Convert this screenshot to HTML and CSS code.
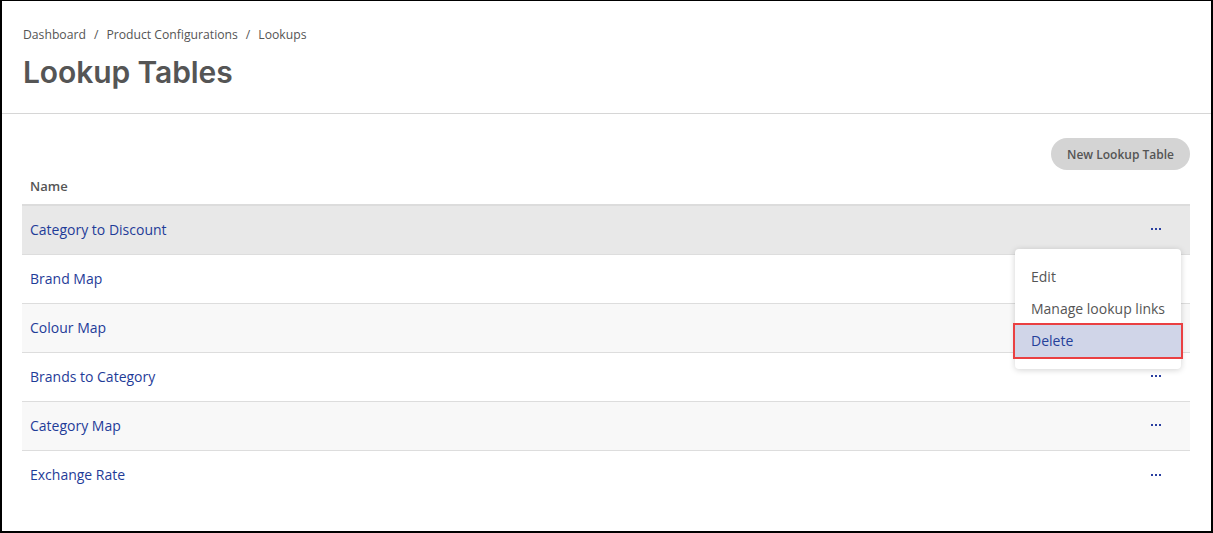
FILE: index.html
```html
<!DOCTYPE html>
<html lang="en">
<head>
    <meta charset="UTF-8">
    <title>Lookup Tables</title>
    <link rel="stylesheet" href="styles.css">
</head>
<body>
<div class="frame">
    <div class="page_head">
        <div class="crumbs">
            <span>Dashboard</span><span class="sep">/</span><span>Product Configurations</span><span class="sep">/</span><span>Lookups</span>
        </div>
        <h1 class="title">Lookup Tables</h1>
    </div>
    <div class="content">
        <div class="toolbar">
            <button class="btn_new">New Lookup Table</button>
        </div>
        <div class="table">
            <div class="thead">Name</div>
            <div class="row hover">
                <span class="name">Category to Discount</span>
                <span class="actions">
                    <svg width="10" height="2" viewBox="0 0 10 2"><rect x="0" width="2" height="2"/><rect x="4" width="2" height="2"/><rect x="8" width="2" height="2"/></svg>
                    <div class="menu">
                        <div class="item">Edit</div>
                        <div class="item">Manage lookup links</div>
                        <div class="item picked">Delete</div>
                    </div>
                </span>
            </div>
            <div class="row">
                <span class="name">Brand Map</span>
                <span class="actions"><svg width="10" height="2" viewBox="0 0 10 2"><rect x="0" width="2" height="2"/><rect x="4" width="2" height="2"/><rect x="8" width="2" height="2"/></svg></span>
            </div>
            <div class="row odd">
                <span class="name">Colour Map</span>
                <span class="actions"><svg width="10" height="2" viewBox="0 0 10 2"><rect x="0" width="2" height="2"/><rect x="4" width="2" height="2"/><rect x="8" width="2" height="2"/></svg></span>
            </div>
            <div class="row">
                <span class="name">Brands to Category</span>
                <span class="actions"><svg width="10" height="2" viewBox="0 0 10 2"><rect x="0" width="2" height="2"/><rect x="4" width="2" height="2"/><rect x="8" width="2" height="2"/></svg></span>
            </div>
            <div class="row odd">
                <span class="name">Category Map</span>
                <span class="actions"><svg width="10" height="2" viewBox="0 0 10 2"><rect x="0" width="2" height="2"/><rect x="4" width="2" height="2"/><rect x="8" width="2" height="2"/></svg></span>
            </div>
            <div class="row last">
                <span class="name">Exchange Rate</span>
                <span class="actions"><svg width="10" height="2" viewBox="0 0 10 2"><rect x="0" width="2" height="2"/><rect x="4" width="2" height="2"/><rect x="8" width="2" height="2"/></svg></span>
            </div>
        </div>
    </div>
</div>
</body>
</html>
```
FILE: styles.css
```css
body
{
    margin: 0;
    font-family: 'Open Sans', 'Noto Sans', sans-serif;
    background: #ffffff;
}
.frame
{
    box-sizing: border-box;
    width: 1213px;
    height: 533px;
    border-style: solid;
    border-color: #000000;
    border-width: 1px 2px 2px 2px;
    overflow: hidden;
}
.page_head
{
    padding: 25px 21px 0 21px;
    height: 87px;
    border-bottom: 1px solid #d6d6d6;
}
.crumbs
{
    font-size: 12.2px;
    color: #555555;
    line-height: 18px;
}
.sep
{
    margin: 0 8px;
}
.title
{
    margin: 10px 0 0 0;
    font-family: Inter, 'DejaVu Sans', sans-serif;
    font-weight: 600;
    font-size: 30px;
    line-height: 36px;
    color: #555555;
    letter-spacing: -0.1px;
}
.content
{
    padding: 24px 21px 0 20px;
}
.toolbar
{
    display: flex;
    justify-content: flex-end;
}
.btn_new
{
    height: 32px;
    padding: 0 16px;
    border: none;
    border-radius: 16px;
    background: #d4d4d4;
    color: #555555;
    font-family: 'Open Sans', sans-serif;
    font-size: 12px;
    font-weight: 600;
}
.thead
{
    padding: 6px 8px 0 8px;
    height: 28px;
    line-height: 20px;
    font-size: 13px;
    font-weight: 600;
    color: #555555;
    border-bottom: 2px solid #dcdcdc;
}
.row
{
    box-sizing: border-box;
    display: flex;
    align-items: center;
    justify-content: space-between;
    height: 49px;
    padding: 0 8px 2px 8px;
    border-bottom: 1px solid #dddddd;
    font-size: 14px;
    color: #1f3c98;
}
.row.last
{
    border-bottom: none;
}
.row.hover
{
    background: #e8e8e8;
}
.row.odd
{
    background: #f8f8f8;
}
.actions
{
    position: relative;
    display: flex;
    align-items: center;
    width: 10px;
    height: 2px;
    margin-right: 21px;
    fill: #2a3fa0;
}
.menu
{
    position: absolute;
    top: 21px;
    right: -20px;
    width: 166px;
    padding: 12px 0;
    background: #ffffff;
    border-radius: 4px;
    box-shadow: 0 1px 6px rgba(0, 0, 0, 0.18);
    z-index: 5;
}
.item
{
    height: 32px;
    line-height: 32px;
    padding-left: 16px;
    font-size: 14px;
    color: #555555;
}
.item.picked
{
    background: #d0d5e8;
    color: #24409a;
    outline: 2px solid #ea4042;
}
```
